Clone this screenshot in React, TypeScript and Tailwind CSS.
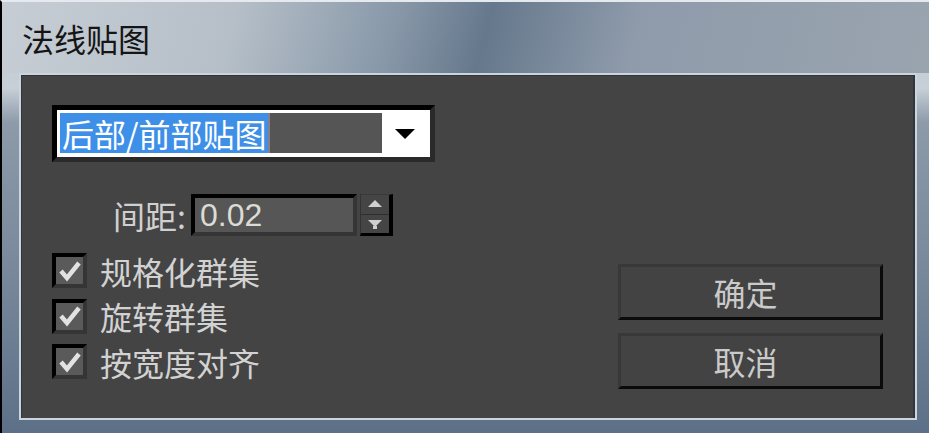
import React from 'react';

const CJK = '"Noto Sans CJK SC", "Noto Sans", sans-serif';

function CheckRow({ label }: { label: string }) {
  return (
    <div className="flex h-[35px] items-center gap-[13px]">
      <div className="flex h-[35px] w-[35px] items-center justify-center border-[4px] border-t-black border-l-black border-r-[#353535] border-b-[#353535] bg-[#5a5a5a]">
        <svg width="24" height="24" viewBox="0 0 24 24">
          <polyline points="3,12 9,19 21,4" fill="none" stroke="#e2e2e2" strokeWidth="4.5" strokeLinejoin="miter" />
        </svg>
      </div>
      <span className="text-[32px] leading-none text-[#d2d2d2]" style={{ fontFamily: CJK }}>{label}</span>
    </div>
  );
}

function DlgButton({ label }: { label: string }) {
  return (
    <button className="flex h-[56px] w-[265px] items-center justify-center border-[3px] border-t-[#383838] border-l-[#383838] border-r-[#0b0b0b] border-b-[#0b0b0b] bg-[#434343] text-[32px] leading-none text-[#cacaca]" style={{ fontFamily: CJK }}>
      <span className="-ml-[10px]">{label}</span>
    </button>
  );
}

export default function App() {
  return (
    <div className="flex h-[433px] w-[929px] flex-col overflow-hidden border-l-2 border-t-2 border-l-black border-t-[#e6eaee] bg-[linear-gradient(180deg,#bcc5ce_0%,#c7cfd7_20%,#8c9aa9_28%,#7a8a9c_60%,#5c7087_100%)]">
      {/* title bar */}
      <div className="flex h-[71px] items-center bg-[linear-gradient(105deg,#c6cdd5_0%,#b6bfc8_25%,#8898a9_42%,#66788c_52%,#7a8a9c_60%,#8f9bab_68%,#9aa4af_100%)] pl-[20px]">
        <span className="text-[32px] leading-none text-[#151515]" style={{ fontFamily: CJK }}>法线贴图</span>
      </div>

      {/* panel */}
      <div className="ml-[17px] h-[347px] w-[898px] border-2 border-[#ccd4dc] bg-[#444444] shadow-[inset_1px_1px_0_#2f363e,inset_-2px_0_0_#2f363e]">
        <div className="pl-[31px] pt-[30px]">
          {/* dropdown */}
          <div className="flex h-[57px] w-[383px] border-[5px] border-t-black border-l-black border-r-[#2a2a2a] border-b-[#2a2a2a] bg-white p-[3px]">
            <div className="flex h-[40px] w-[322px] items-center bg-[#555555]">
              <div className="flex h-[40px] items-center border-r border-r-[#c8702c] bg-[#3d8fe7] pl-[2px] pr-[2px] text-[32px] leading-none text-white" style={{ fontFamily: CJK }}>
                后部/前部贴图
              </div>
            </div>
            <div className="flex flex-1 items-center justify-center">
              <svg width="22" height="14" viewBox="0 0 22 14">
                <polygon points="1,2 21,2 11,12" fill="#000" />
              </svg>
            </div>
          </div>

          {/* spacing */}
          <div className="mt-[32px] flex h-[42px] items-center pl-[61px]">
            <span className="w-[78px] text-[32px] leading-none text-[#d0d0d0]" style={{ fontFamily: CJK }}>间距:</span>
            <div className="flex h-[42px] w-[166px] items-center border-[4px] border-t-black border-l-black border-r-[#353535] border-b-[#353535] bg-[#565656] pl-[5px]">
              <span className="text-[32px] leading-none text-[#dcdcd4]" style={{ fontFamily: '"Liberation Sans", Arial, sans-serif' }}>0.02</span>
            </div>
            <div className="ml-[3px] flex h-[42px] w-[33px] flex-col border-l border-t border-l-[#333] border-t-[#3a3a3a] border-r-[4px] border-b-[3px] border-r-black border-b-black bg-[#454545]">
              <div className="flex flex-1 items-center justify-center border-b border-b-[#2e2e2e]">
                <svg width="14" height="8" viewBox="0 0 14 8"><polygon points="7,0 14,7 0,7" fill="#cfcfcf" /></svg>
              </div>
              <div className="flex flex-1 items-center justify-center">
                <svg width="14" height="10" viewBox="0 0 14 10"><polygon points="0,1 14,1 7,8" fill="#cfcfcf" /><rect x="5" y="7" width="4" height="3" fill="#cfcfcf" /></svg>
              </div>
            </div>
          </div>

          {/* options + buttons */}
          <div className="mt-[17px] flex justify-between pr-[32px]">
            <div className="flex flex-col gap-[10.5px]">
              <CheckRow label="规格化群集" />
              <CheckRow label="旋转群集" />
              <CheckRow label="按宽度对齐" />
            </div>
            <div className="mt-[11px] flex flex-col gap-[13px]">
              <DlgButton label="确定" />
              <DlgButton label="取消" />
            </div>
          </div>
        </div>
      </div>
    </div>
  );
}
